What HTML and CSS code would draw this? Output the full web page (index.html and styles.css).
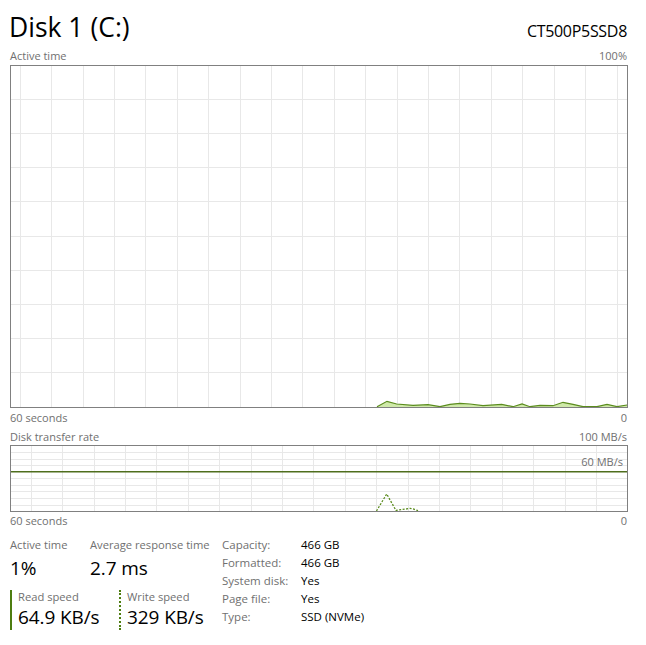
FILE: index.html
```html
<!DOCTYPE html>
<html lang="en">
<head>
<meta charset="utf-8">
<title>Disk 1 (C:)</title>
<link rel="stylesheet" href="styles.css">
</head>
<body>
<div class="page">
  <header class="head">
    <h1 class="title">Disk 1 (C:)</h1>
    <div class="model">CT500P5SSD8</div>
  </header>

  <div class="axis axis-top"><span>Active time</span><span>100%</span></div>
  <div class="graph graph-active">
    <svg width="618" height="343" viewBox="0 0 618 343">
      <g class="grid" stroke="#e8e8e8" stroke-width="1">
        <line x1="10.5" y1="0" x2="10.5" y2="343"/>
        <line x1="41.5" y1="0" x2="41.5" y2="343"/>
        <line x1="73.5" y1="0" x2="73.5" y2="343"/>
        <line x1="104.5" y1="0" x2="104.5" y2="343"/>
        <line x1="135.5" y1="0" x2="135.5" y2="343"/>
        <line x1="167.5" y1="0" x2="167.5" y2="343"/>
        <line x1="198.5" y1="0" x2="198.5" y2="343"/>
        <line x1="230.5" y1="0" x2="230.5" y2="343"/>
        <line x1="261.5" y1="0" x2="261.5" y2="343"/>
        <line x1="292.5" y1="0" x2="292.5" y2="343"/>
        <line x1="324.5" y1="0" x2="324.5" y2="343"/>
        <line x1="355.5" y1="0" x2="355.5" y2="343"/>
        <line x1="387.5" y1="0" x2="387.5" y2="343"/>
        <line x1="418.5" y1="0" x2="418.5" y2="343"/>
        <line x1="449.5" y1="0" x2="449.5" y2="343"/>
        <line x1="481.5" y1="0" x2="481.5" y2="343"/>
        <line x1="512.5" y1="0" x2="512.5" y2="343"/>
        <line x1="544.5" y1="0" x2="544.5" y2="343"/>
        <line x1="575.5" y1="0" x2="575.5" y2="343"/>
        <line x1="607.5" y1="0" x2="607.5" y2="343"/>
        <line x1="0" y1="34.5" x2="618" y2="34.5"/>
        <line x1="0" y1="68.5" x2="618" y2="68.5"/>
        <line x1="0" y1="102.5" x2="618" y2="102.5"/>
        <line x1="0" y1="136.5" x2="618" y2="136.5"/>
        <line x1="0" y1="171.5" x2="618" y2="171.5"/>
        <line x1="0" y1="205.5" x2="618" y2="205.5"/>
        <line x1="0" y1="239.5" x2="618" y2="239.5"/>
        <line x1="0" y1="273.5" x2="618" y2="273.5"/>
        <line x1="0" y1="307.5" x2="618" y2="307.5"/>
      </g>
      <polygon class="area" points="367,342 377,336.3 386.7,339 403,340.3 418,339.7 430,341.7 440,339.3 450,338.3 460,339 473,340.7 491.7,339.3 503,341.7 512,339 520,341.7 530,340.3 543,340.7 553,337.3 563,339.3 573,341.7 587,341.7 597,339.3 607,341.7 617,340 617,342"/>
      <polyline class="line" points="367,341.7 377,336.3 386.7,339 403,340.3 418,339.7 430,341.7 440,339.3 450,338.3 460,339 473,340.7 491.7,339.3 503,341.7 512,339 520,341.7 530,340.3 543,340.7 553,337.3 563,339.3 573,341.7 587,341.7 597,339.3 607,341.7 617,340"/>
      <rect class="frame" x="0.5" y="0.5" width="617" height="342"/>
    </svg>
  </div>
  <div class="axis"><span>60 seconds</span><span>0</span></div>

  <div class="axis axis-second"><span>Disk transfer rate</span><span>100 MB/s</span></div>
  <div class="graph graph-rate">
    <svg width="618" height="67" viewBox="0 0 618 67">
      <g class="grid" stroke="#e8e8e8" stroke-width="1">
        <line x1="21.5" y1="0" x2="21.5" y2="67"/>
        <line x1="52.5" y1="0" x2="52.5" y2="67"/>
        <line x1="84.5" y1="0" x2="84.5" y2="67"/>
        <line x1="115.5" y1="0" x2="115.5" y2="67"/>
        <line x1="146.5" y1="0" x2="146.5" y2="67"/>
        <line x1="178.5" y1="0" x2="178.5" y2="67"/>
        <line x1="209.5" y1="0" x2="209.5" y2="67"/>
        <line x1="241.5" y1="0" x2="241.5" y2="67"/>
        <line x1="272.5" y1="0" x2="272.5" y2="67"/>
        <line x1="303.5" y1="0" x2="303.5" y2="67"/>
        <line x1="335.5" y1="0" x2="335.5" y2="67"/>
        <line x1="366.5" y1="0" x2="366.5" y2="67"/>
        <line x1="398.5" y1="0" x2="398.5" y2="67"/>
        <line x1="429.5" y1="0" x2="429.5" y2="67"/>
        <line x1="460.5" y1="0" x2="460.5" y2="67"/>
        <line x1="492.5" y1="0" x2="492.5" y2="67"/>
        <line x1="523.5" y1="0" x2="523.5" y2="67"/>
        <line x1="555.5" y1="0" x2="555.5" y2="67"/>
        <line x1="586.5" y1="0" x2="586.5" y2="67"/>
        <line x1="0" y1="7.5" x2="618" y2="7.5"/>
        <line x1="0" y1="14.5" x2="618" y2="14.5"/>
        <line x1="0" y1="20.5" x2="618" y2="20.5"/>
        <line x1="0" y1="33.5" x2="618" y2="33.5"/>
        <line x1="0" y1="40.5" x2="618" y2="40.5"/>
        <line x1="0" y1="46.5" x2="618" y2="46.5"/>
        <line x1="0" y1="53.5" x2="618" y2="53.5"/>
        <line x1="0" y1="60.5" x2="618" y2="60.5"/>
      </g>
      <line class="limit" x1="0" y1="26.8" x2="618" y2="26.8"/>
      <polyline class="dash" points="366.5,66 376.7,49 386,65.5 391,64.6 396,64 400,63.4 404,64.2 408,65.6"/>
      <rect class="frame" x="0.5" y="0.5" width="617" height="66"/>
    </svg>
    <span class="limit-label">60 MB/s</span>
  </div>
  <div class="axis"><span>60 seconds</span><span>0</span></div>

  <section class="stats">
    <div class="stats-main">
      <div class="stats-row stats-row-top">
        <div class="stat stat-active">
          <div class="stat-label">Active time</div>
          <div class="stat-value">1%</div>
        </div>
        <div class="stat">
          <div class="stat-label">Average response time</div>
          <div class="stat-value">2.7 ms</div>
        </div>
      </div>
      <div class="stats-row stats-row-speed">
        <div class="stat stat-read">
          <div class="stat-label">Read speed</div>
          <div class="stat-value">64.9 KB/s</div>
        </div>
        <div class="stat stat-write">
          <div class="stat-label">Write speed</div>
          <div class="stat-value">329 KB/s</div>
        </div>
      </div>
    </div>
    <dl class="props">
      <dt>Capacity:</dt><dd>466 GB</dd>
      <dt>Formatted:</dt><dd>466 GB</dd>
      <dt>System disk:</dt><dd>Yes</dd>
      <dt>Page file:</dt><dd>Yes</dd>
      <dt>Type:</dt><dd>SSD (NVMe)</dd>
    </dl>
  </section>
</div>
</body>
</html>
```

FILE: styles.css
```css
* { box-sizing: border-box; }

html, body {
  margin: 0;
  background: #ffffff;
}

body {
  font-family: "Open Sans", "Noto Sans", "Liberation Sans", sans-serif;
  color: #000;
}

.page {
  padding: 11px 19px 0 10px;
  width: 646px;
}

.head {
  display: flex;
  justify-content: space-between;
  align-items: baseline;
  height: 37px;
}

.title {
  margin: 0 0 0 -1px;
  font-size: 26.5px;
  font-weight: 400;
  line-height: 32px;
  letter-spacing: 0;
}

.model {
  font-size: 16px;
  line-height: 20px;
  letter-spacing: -0.3px;
}

.axis {
  display: flex;
  justify-content: space-between;
  font-size: 11px;
  line-height: 15px;
  color: #707070;
  height: 15px;
}

.axis-top {
  margin-bottom: 2px;
}

.axis-second {
  margin-top: 4px;
  margin-bottom: 1px;
}

.graph {
  position: relative;
  width: 618px;
  margin-bottom: 2px;
}

.graph-rate {
  margin-bottom: 1px;
}

.graph svg {
  display: block;
}

.frame {
  fill: none;
  stroke: #808080;
  stroke-width: 1;
}

.area {
  fill: #cfe9a9;
  stroke: none;
}

.line {
  fill: none;
  stroke: #5b8c1e;
  stroke-width: 1.2;
}

.limit {
  stroke: #4f6e1d;
  stroke-width: 1.6;
}

.dash {
  fill: none;
  stroke: #5b8c1e;
  stroke-width: 1.3;
  stroke-dasharray: 2 1.5;
}

.limit-label {
  position: absolute;
  right: 5px;
  top: 10px;
  font-size: 11px;
  line-height: 14px;
  color: #707070;
}

.stats {
  display: flex;
  margin-top: 9px;
}

.stats-main {
  width: 212px;
  display: flex;
  flex-direction: column;
  gap: 9px;
}

.stats-row {
  display: flex;
}

.stat-active {
  width: 80px;
}

.stat-label {
  font-size: 11.2px;
  line-height: 16px;
  color: #707070;
}

.stat-value {
  font-size: 19px;
  line-height: 26px;
  letter-spacing: -0.1px;
}

.stats-row-top .stat-value {
  margin-top: 2px;
}

.stats-row-speed .stat-label {
  line-height: 14px;
}

.stat-read {
  width: 109px;
  border-left: 2px solid #4e7d10;
  padding-left: 6px;
}

.stat-write {
  border-left: 2px dotted #4e7d10;
  padding-left: 6px;
}

.props {
  margin: -1px 0 0 0;
  display: grid;
  grid-template-columns: 79px auto;
  grid-auto-rows: 18px;
  align-content: start;
  font-size: 11.5px;
  line-height: 18px;
}

.props dt {
  color: #707070;
}

.props dd {
  margin: 0;
  color: #000;
}
```
